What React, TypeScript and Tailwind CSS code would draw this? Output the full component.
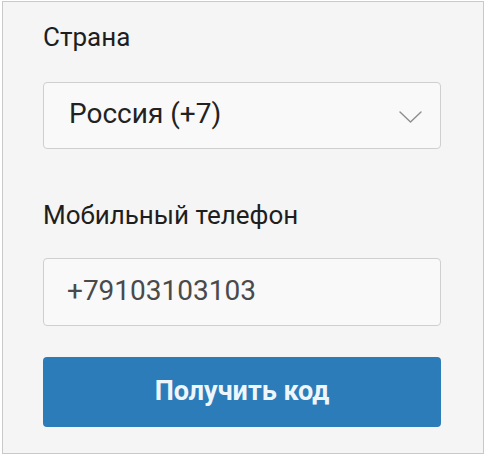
export default function App() {
  return (
    <div className="h-[458px] w-[486px] bg-white pl-[2px] pt-[1px] font-['Roboto',sans-serif]">
      <div className="flex h-[453px] w-[482px] flex-col border border-[#c9c9c9] bg-[#f5f5f5] pl-[40px] pr-[42px] pt-[20px]">
        <label className="text-[26px] leading-[30px] text-[#1e1e1e]">Страна</label>

        <div className="mt-[30px] flex h-[67px] items-center justify-between rounded-[4px] border border-[#cfcfcf] bg-[#f9f9f9] pl-[25px] pr-[18px]">
          <span className="pb-[3px] text-[28px] leading-[32px] text-[#222]">Россия (+7)</span>
          {/* thin chevron */}
          <svg width="23" height="12" viewBox="0 0 23 12" fill="none" className="mt-[2px]">
            <path d="M1 1 L11.5 11 L22 1" stroke="#8d8d8d" strokeWidth="1.4" strokeLinecap="round" strokeLinejoin="round" />
          </svg>
        </div>

        <label className="mt-[51px] text-[26px] leading-[30px] text-[#1e1e1e]">Мобильный телефон</label>

        <div className="mt-[28px] flex h-[68px] items-center rounded-[4px] border border-[#cfcfcf] bg-[#f9f9f9] pl-[23px]">
          <span className="pb-[3px] text-[28px] leading-[32px] text-[#4a4a4a]">+79103103103</span>
        </div>

        <button
          type="button"
          className="mt-[31px] flex h-[70px] w-full items-center justify-center rounded-[4px] bg-[#2c7cba] pb-[2px] text-[27px] font-bold text-[#eef6fc]"
        >
          Получить код
        </button>
      </div>
    </div>
  );
}
